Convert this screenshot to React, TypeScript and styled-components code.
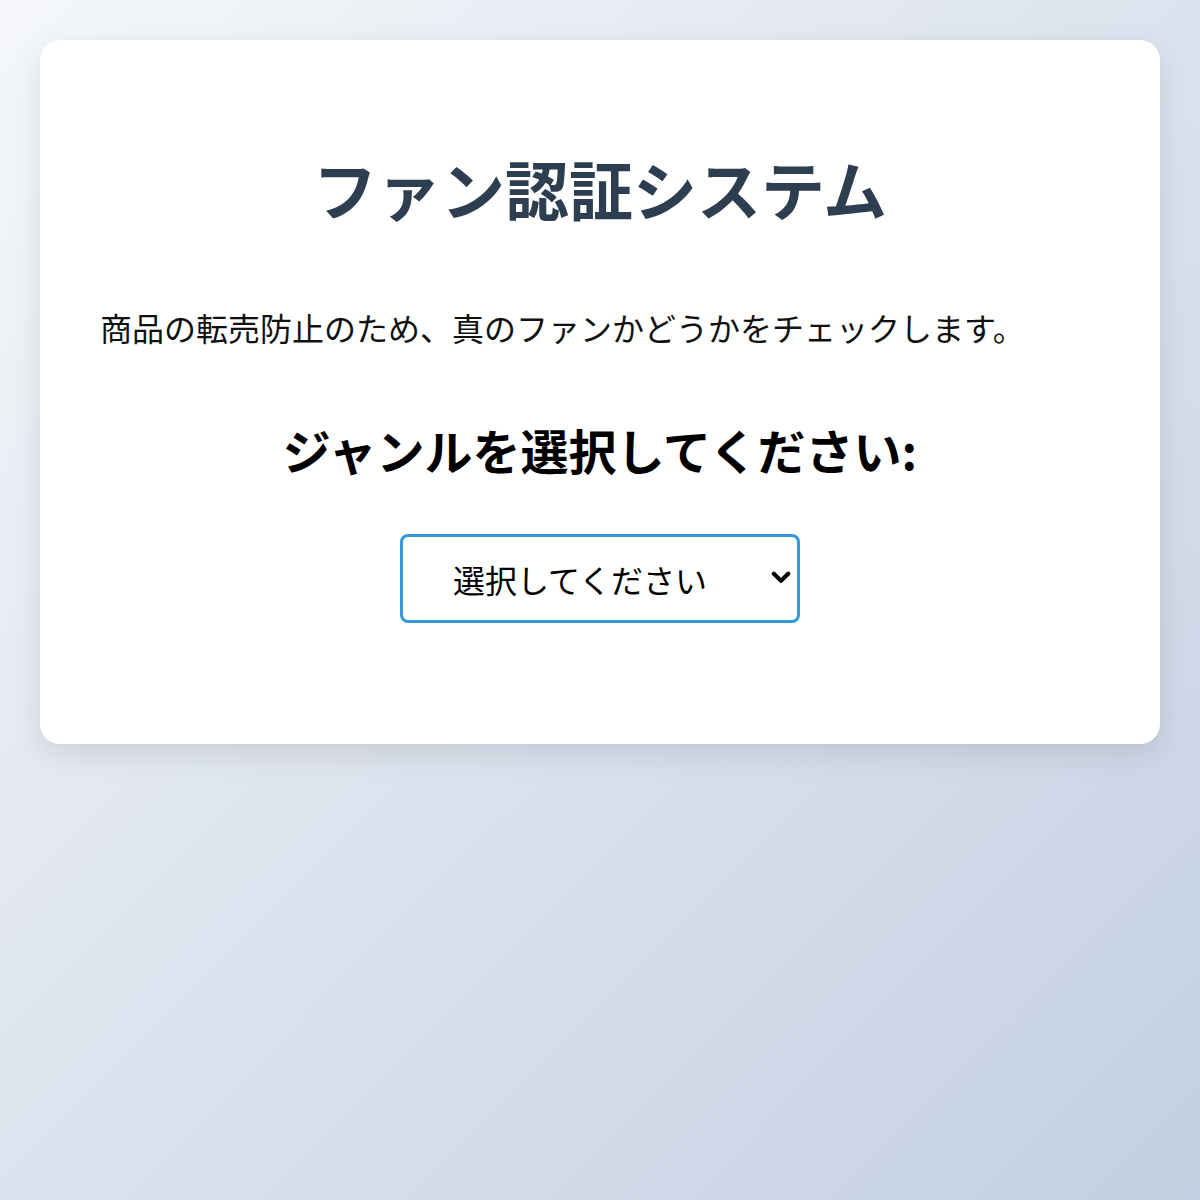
import React from 'react';
import styled, { createGlobalStyle } from 'styled-components';

const GlobalStyle = createGlobalStyle`
  html, body {
    margin: 0;
    padding: 0;
  }
  body {
    min-height: 1200px;
    background: linear-gradient(135deg, #f5f7fa 0%, #c3cfe2 100%);
    font-family: "Noto Sans CJK JP", "Noto Sans", sans-serif;
  }
`;

const Page = styled.div`
  padding: 40px;
`;

const Card = styled.div`
  background: #ffffff;
  border-radius: 20px;
  box-shadow: 0 10px 30px rgba(0, 0, 0, 0.1);
  padding: 60px 60px 121px;
  display: flex;
  flex-direction: column;
  align-items: center;
`;

const Title = styled.h1`
  margin: 49px 0 0;
  color: #2c3e50;
  font-size: 64px;
  font-weight: 700;
  line-height: 1.2;
  text-align: center;
`;

const Lead = styled.p`
  align-self: stretch;
  margin: 77px 0 0;
  color: #111;
  font-size: 32px;
  line-height: 1.5;
`;

const Question = styled.h2`
  margin: 67px 0 0;
  color: #000;
  font-size: 48px;
  font-weight: 700;
  line-height: 1.3;
`;

const SelectWrap = styled.div`
  position: relative;
  margin-top: 54px;
  width: 400px;
  height: 89px;
`;

const GenreSelect = styled.select`
  appearance: none;
  -webkit-appearance: none;
  box-sizing: border-box;
  width: 100%;
  height: 100%;
  padding: 0 40px 0 50px;
  border: 3px solid #3498db;
  border-radius: 8px;
  background: #fff;
  color: #000;
  font-family: inherit;
  font-size: 32px;
  outline: none;
`;

const Chevron = styled.svg`
  position: absolute;
  right: 9px;
  top: 37px;
  width: 20px;
  height: 13px;
  pointer-events: none;
`;

export default function App() {
  return (
    <>
      <GlobalStyle />
      <Page>
        <Card>
          <Title>ファン認証システム</Title>
          <Lead>商品の転売防止のため、真のファンかどうかをチェックします。</Lead>
          <Question>ジャンルを選択してください:</Question>
          <SelectWrap>
            <GenreSelect defaultValue="">
              <option value="">選択してください</option>
              <option value="music">音楽</option>
              <option value="anime">アニメ</option>
              <option value="sports">スポーツ</option>
            </GenreSelect>
            <Chevron viewBox="0 0 20 13">
              <path d="M2.8 2.8 L10 9.8 L17.2 2.8" fill="none" stroke="#000" strokeWidth="4.2" strokeLinecap="round" strokeLinejoin="round" />
            </Chevron>
          </SelectWrap>
        </Card>
      </Page>
    </>
  );
}
